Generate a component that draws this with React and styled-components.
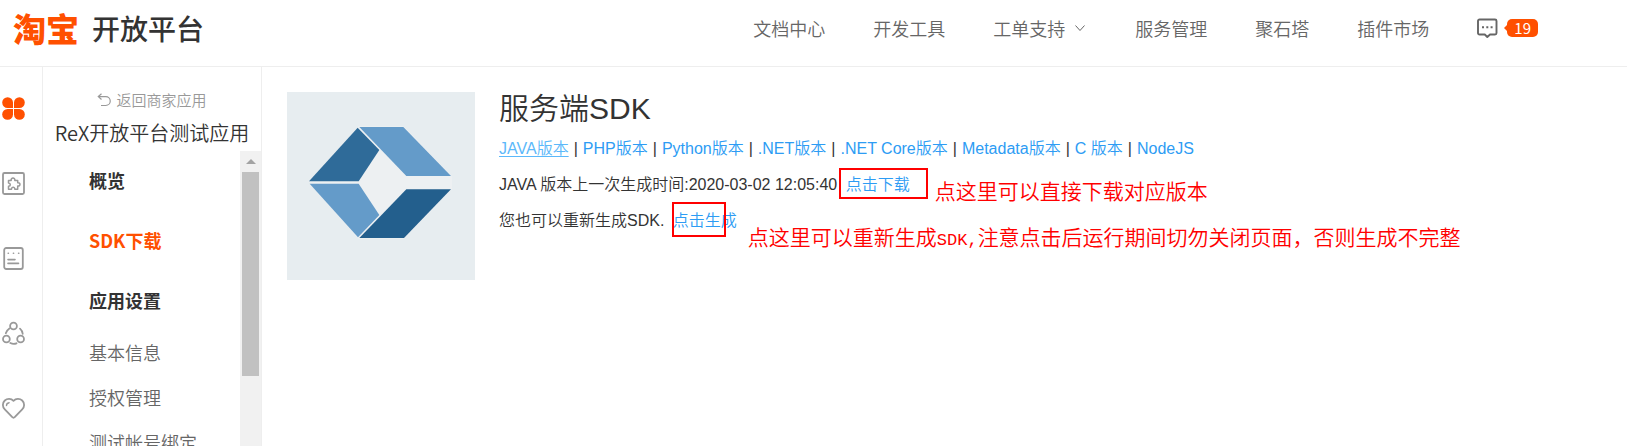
import React from 'react'
import styled, { createGlobalStyle, ThemeProvider } from 'styled-components'

const theme = {
  brand: '#ff5000',
  textColor: '#333',
  mutedColor: '#666',
  iconColor: '#999',
  linkColor: '#2d9cf4',
  linkHoverColor: '#5cb8fa',
  lineColor: '#eee',
  noteColor: '#f00',
  cjkFont: '"Noto Sans CJK SC", sans-serif',
  sansFont: '"Liberation Sans", "Noto Sans CJK SC", sans-serif',
  monoFont: '"Liberation Mono", "Noto Sans CJK SC", monospace'
}

const GlobalStyle = createGlobalStyle`
  * {
    box-sizing: border-box;
  }

  body {
    margin: 0;
    background: #fff;
    overflow: hidden;
  }
`

const Page = styled.div`
  display: flex;
  flex-direction: column;
  height: 100vh;
  color: ${props => props.theme.textColor};
  font-family: ${props => props.theme.cjkFont};
  font-weight: 350;
`

const Header = styled.header`
  display: flex;
  flex: none;
  align-items: center;
  justify-content: space-between;
  height: 67px;
  padding: 0 89px 10px 13px;
  border-bottom: 1px solid ${props => props.theme.lineColor};
`

const Brand = styled.a`
  display: flex;
  align-items: center;
  gap: 13px;
  color: ${props => props.theme.textColor};
  font-size: 28px;
  font-weight: 500;
  line-height: 40px;
  text-decoration: none;
`

const BrandMark = styled.span`
  color: ${props => props.theme.brand};
  font-size: 33px;
  font-weight: 900;
`

const TopNav = styled.nav`
  display: flex;
  align-items: center;
  gap: 48px;
`

const TopLink = styled.a`
  display: flex;
  align-items: center;
  gap: 9px;
  color: ${props => props.theme.mutedColor};
  font-size: 18px;
  line-height: 28px;
  text-decoration: none;
`

const Badge = styled.span`
  position: relative;
  min-width: 30px;
  padding: 0 7px;
  border-radius: 5px;
  background: ${props => props.theme.brand};
  color: #fff;
  font-size: 15px;
  font-weight: 400;
  line-height: 18px;
  text-align: center;

  &::before {
    content: '';
    position: absolute;
    top: 4px;
    left: -3px;
    border: 5px solid transparent;
    border-left-width: 0;
    border-right-color: ${props => props.theme.brand};
  }
`

const Body = styled.div`
  display: flex;
  flex: 1;
  min-height: 0;
`

const Rail = styled.nav`
  display: flex;
  flex: none;
  flex-direction: column;
  width: 43px;
  padding-top: 4px;
  border-right: 1px solid ${props => props.theme.lineColor};
`

const RailButton = styled.button`
  display: flex;
  flex: none;
  align-items: center;
  height: 75px;
  padding: 0 0 0 1px;
  border: 0;
  background: none;
  color: ${props => (props.$active ? props.theme.brand : props.theme.iconColor)};
`

const Sidebar = styled.aside`
  display: flex;
  flex: none;
  flex-direction: column;
  width: 219px;
  padding-top: 17px;
  border-right: 1px solid ${props => props.theme.lineColor};
`

const BackLink = styled.a`
  display: flex;
  align-items: center;
  justify-content: center;
  gap: 5px;
  color: ${props => props.theme.iconColor};
  font-size: 15px;
  line-height: 32px;
  text-decoration: none;
`

const AppName = styled.div`
  padding-bottom: 2px;
  font-size: 20px;
  line-height: 33px;
  text-align: center;
  white-space: nowrap;
`

const MenuArea = styled.div`
  display: flex;
  flex: 1;
  min-height: 0;
`

const Menu = styled.ul`
  flex: 1;
  margin: 0;
  padding: 0 0 0 46px;
  overflow: hidden;
  list-style: none;
`

const MenuLink = styled.a`
  display: block;
  padding-bottom: 2px;
  color: ${props =>
    props.$active
      ? props.theme.brand
      : props.$sub ? props.theme.mutedColor : props.theme.textColor};
  font-size: 18px;
  font-weight: ${props => (props.$sub ? 350 : 700)};
  line-height: ${props => (props.$sub ? 43 : 58)}px;
  text-decoration: none;
`

const ScrollTrack = styled.div`
  display: flex;
  flex-direction: column;
  align-items: center;
  width: 21px;
  background: #f1f1f1;
`

const ScrollArrow = styled.div`
  display: flex;
  flex: none;
  align-items: center;
  height: 21px;
`

const ScrollThumb = styled.div`
  width: 17px;
  height: 204px;
  background: #c1c1c1;
`

const Main = styled.main`
  display: flex;
  flex: 1;
  align-items: flex-start;
  gap: 24px;
  min-width: 0;
  padding: 25px;
  font-family: ${props => props.theme.sansFont};
`

const Info = styled.div`
  font-size: 16px;
  white-space: nowrap;
`

const Title = styled.h1`
  margin: 0 0 5px;
  font-size: 30px;
  font-weight: 350;
  line-height: 34px;
`

const Line = styled.p`
  margin: 0;
  line-height: 36px;
`

const Divider = styled.span`
  margin: 0 5px;
`

const TextLink = styled.a`
  color: ${props =>
    props.$hovered ? props.theme.linkHoverColor : props.theme.linkColor};
  text-decoration: ${props => (props.$hovered ? 'underline' : 'none')};
  text-underline-offset: 2px;
`

const Marked = styled.span`
  position: relative;
  margin-left: 4px;
`

const MarkBox = styled.span`
  position: absolute;
  top: ${props => props.$top}px;
  left: ${props => props.$left}px;
  width: ${props => props.$width}px;
  height: ${props => props.$height}px;
  border: 2px solid ${props => props.theme.noteColor};
  pointer-events: none;
`

const Note = styled.span`
  position: absolute;
  top: ${props => props.$top}px;
  left: ${props => props.$left}px;
  color: ${props => props.theme.noteColor};
  font-family: ${props => props.theme.cjkFont};
  font-size: 21px;
  line-height: 28px;
`

const NoteCode = styled.span`
  font-family: ${props => props.theme.monoFont};
  font-size: 17px;
`

const RailSvg = ({ children }) => (
  <svg
    width="25"
    height="25"
    viewBox="0 0 25 25"
    fill="none"
    stroke="currentColor"
    strokeWidth="1.8"
    strokeLinecap="round"
    strokeLinejoin="round"
    aria-hidden="true"
  >
    {children}
  </svg>
)

const CloverIcon = () => (
  <RailSvg>
    <g fill="currentColor" stroke="none">
      <path d="M12 12H6.6A5.4 5.4 0 1 1 12 6.600Z" />
      <path d="M13 12V6.600A5.4 5.4 0 1 1 18.400 12Z" />
      <path d="M12 13V18.400A5.400 5.400 0 1 1 6.600 13Z" />
      <path d="M13 13H18.400A5.400 5.400 0 1 1 13 18.400Z" />
    </g>
  </RailSvg>
)

const PluginIcon = () => (
  <RailSvg>
    <rect x="2" y="2" width="21" height="21" rx="1.5" />
    <path
      strokeWidth="1.5"
      d="M7.5 9.500h2.700c-.8-3.200 4.400-3.200 3.600 0h2.900v2.300c3-.6 3 3.800 0 3.200v3.200h-2.900c.2-2.500-3.500-2.500-3.300 0h-3v-3c2.400 0 2.400-2.900 0-3.100z"
    />
  </RailSvg>
)

const DocIcon = () => (
  <RailSvg>
    <rect x="3.2" y="2" width="18.6" height="21" rx="2" />
    <path
      strokeWidth="1.6"
      d="M7.2 7.3h.2M12.4 7.3h.2M17.6 7.3h.2M7 13.6h7M7 17.4h10.5"
    />
  </RailSvg>
)

const ShareIcon = () => (
  <RailSvg>
    <circle cx="12.5" cy="5" r="3.4" />
    <circle cx="5.4" cy="18" r="3.4" />
    <circle cx="19.6" cy="18" r="3.4" />
    <path d="M8.4 7.4C6.4 8.8 5.2 10.4 4.8 12.2M19 7.6c1.8 1.6 2.6 3.4 2.7 5.2M9.3 22c2 .9 4.2 1 6.2.3" />
  </RailSvg>
)

const HeartIcon = () => (
  <RailSvg>
    <path d="M12.5 4.8C10.2 2.4 6.2 2.3 3.8 4.5c-2.6 2.5-2.5 6.3 0 8.8l7.5 7.9c.7.7 1.7.7 2.4 0l7.5-7.9c2.5-2.5 2.6-6.3 0-8.8-2.4-2.2-6.4-2.1-8.7.3z" />
    <path strokeWidth="1.4" d="M5.5 9.6c0-1.6 1-2.7 2.6-2.9" />
  </RailSvg>
)

const ChevronIcon = () => (
  <svg
    width="13"
    height="10"
    viewBox="0 0 13 10"
    fill="none"
    stroke="currentColor"
    strokeWidth="1"
    aria-hidden="true"
  >
    <path d="M1.5 2.500L6 7.500l4.500-5" />
  </svg>
)

const MessageIcon = () => (
  <svg width="21" height="21" viewBox="0 0 21 21" aria-hidden="true">
    <path
      d="M2.500 1.500h15.500a1.500 1.500 0 0 1 1.500 1.500v12a1.500 1.500 0 0 1-1.500 1.500h-5L10.300 19l-2.500-2.500H2.500A1.500 1.500 0 0 1 1 15V3a1.500 1.500 0 0 1 1.500-1.500z"
      fill="none"
      stroke="#666"
      strokeWidth="1.900"
      strokeLinejoin="round"
    />
    <path d="M5 8.200h2v2H5zM9.300 8.200h2v2h-2zM13.600 8.200h2v2h-2z" fill="#666" />
  </svg>
)

const BackIcon = () => (
  <svg
    width="14"
    height="14"
    viewBox="0 0 14 14"
    fill="none"
    stroke="currentColor"
    strokeWidth="1.2"
    aria-hidden="true"
  >
    <path d="M4.500.8L1.300 3.600l3.200 2.900M1.500 3.600h7.300a4.400 4.400 0 0 1 0 8.900H4" />
  </svg>
)

const SdkLogo = styled.svg`
  flex: none;
  width: 188px;
  height: 188px;
  background: #e7edf0;
`

const railItems = [
  { name: '应用', icon: CloverIcon, active: true },
  { name: '插件', icon: PluginIcon },
  { name: '文档', icon: DocIcon },
  { name: '共享', icon: ShareIcon },
  { name: '收藏', icon: HeartIcon }
]

const topLinks = [
  { name: '文档中心' },
  { name: '开发工具' },
  { name: '工单支持', dropdown: true },
  { name: '服务管理' },
  { name: '聚石塔' },
  { name: '插件市场' }
]

const menuItems = [
  { name: '概览' },
  { name: 'SDK下载', active: true },
  { name: '应用设置' },
  { name: '基本信息', sub: true },
  { name: '授权管理', sub: true },
  { name: '测试帐号绑定', sub: true }
]

const versions = [
  'JAVA版本',
  'PHP版本',
  'Python版本',
  '.NET版本',
  '.NET Core版本',
  'Metadata版本',
  'C 版本',
  'NodeJS'
]

const App = () => (
  <ThemeProvider theme={theme}>
    <GlobalStyle />
    <Page>
      <Header>
        <Brand href="#">
          <BrandMark>淘宝</BrandMark>
          开放平台
        </Brand>
        <TopNav>
          {topLinks.map(link => (
            <TopLink href="#" key={link.name}>
              {link.name}
              {link.dropdown && <ChevronIcon />}
            </TopLink>
          ))}
          <TopLink href="#" aria-label="消息 19">
            <MessageIcon />
            <Badge>19</Badge>
          </TopLink>
        </TopNav>
      </Header>
      <Body>
        <Rail>
          {railItems.map(item => (
            <RailButton
              key={item.name}
              aria-label={item.name}
              $active={item.active}
            >
              <item.icon />
            </RailButton>
          ))}
        </Rail>
        <Sidebar>
          <BackLink href="#">
            <BackIcon />
            返回商家应用
          </BackLink>
          <AppName>ReX开放平台测试应用</AppName>
          <MenuArea>
            <Menu>
              {menuItems.map(item => (
                <li key={item.name}>
                  <MenuLink href="#" $active={item.active} $sub={item.sub}>
                    {item.name}
                  </MenuLink>
                </li>
              ))}
            </Menu>
            <ScrollTrack>
              <ScrollArrow>
                <svg width="10" height="5" viewBox="0 0 10 5" aria-hidden="true">
                  <path d="M0 5L5 0l5 5z" fill="#a3a3a3" />
                </svg>
              </ScrollArrow>
              <ScrollThumb />
            </ScrollTrack>
          </MenuArea>
        </Sidebar>
        <Main>
          <SdkLogo viewBox="0 0 564 564" aria-hidden="true">
            <path
              d="M66 271L214 103H350L495 254V290L351 440H214Z"
              fill="#edf0f2"
            />
            <path d="M66 268L212 107L277 174L215 268Z" fill="#2f6b99" />
            <path d="M217 105H349L492 252H358Z" fill="#649bc9" />
            <path d="M68 275H215L277 369L213 436Z" fill="#649bc9" />
            <path d="M358 292H492L351 438H217Z" fill="#235f8d" />
          </SdkLogo>
          <Info>
            <Title>服务端SDK</Title>
            <Line>
              {versions.map((version, i) => (
                <React.Fragment key={version}>
                  {i > 0 && <Divider>|</Divider>}
                  <TextLink href="#" $hovered={i === 0}>
                    {version}
                  </TextLink>
                </React.Fragment>
              ))}
            </Line>
            <Line>
              JAVA 版本上一次生成时间:2020-03-02 12:05:40{' '}
              <Marked>
                <TextLink href="#">点击下载</TextLink>
                <MarkBox $top={-8} $left={-7} $width={89} $height={31} />
                <Note $top={0} $left={89}>
                  点这里可以直接下载对应版本
                </Note>
              </Marked>
            </Line>
            <Line>
              您也可以重新生成SDK.{' '}
              <Marked>
                <TextLink href="#">点击生成</TextLink>
                <MarkBox $top={-10} $left={-1} $width={54} $height={35} />
                <Note $top={10} $left={75}>
                  点这里可以重新生成<NoteCode>SDK,</NoteCode>注意点击后运行期间切勿关闭页面，否则生成不完整
                </Note>
              </Marked>
            </Line>
          </Info>
        </Main>
      </Body>
    </Page>
  </ThemeProvider>
)

export default App
